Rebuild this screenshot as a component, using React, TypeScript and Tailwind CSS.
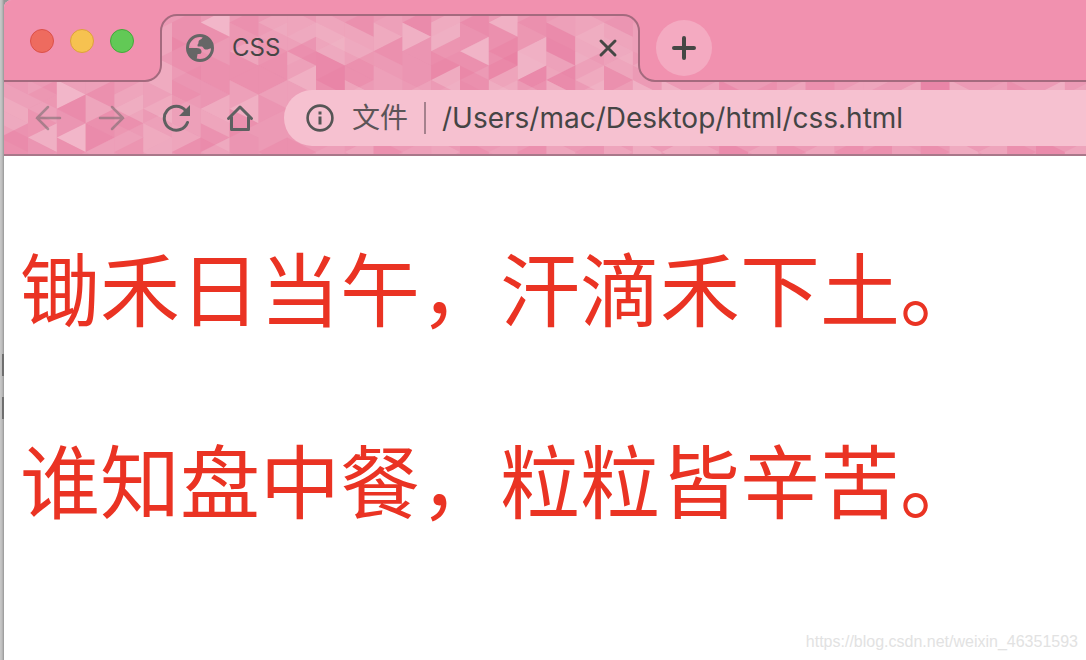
type Facet = [col: number, step: number, shape: "L" | "R" | "U" | "D", tone: number];

const W = 28.8;
const H = 14.4;

// L and R are triangles pointing left or right, U and D are bands rising or falling.
const facets: Facet[] = [
  [0, 5, "D", 1], [0, 6, "D", 2], [0, 8, "L", -3], [0, 7, "R", 1], [0, 9, "D", -2],
  [1, 5, "L", -2], [1, 5, "R", 1], [1, 6, "U", 1], [1, 7, "R", -2], [1, 8, "L", 4], [1, 9, "R", -1],
  [2, 5, "R", 5], [2, 6, "L", -3], [2, 4, "L", 1], [2, 8, "L", 5], [2, 7, "R", -1], [2, 9, "R", -2],
  [3, 4, "R", 1], [3, 5, "L", -2], [3, 6, "R", 2], [3, 7, "L", -2], [3, 8, "R", -3], [3, 9, "L", 1],
  [4, 5, "U", 2], [4, 6, "L", 2], [4, 7, "R", -2], [4, 8, "D", 1], [4, 9, "L", -2],
  [5, 5, "D", 1], [5, 6, "L", 2], [5, 7, "U", 1], [5, 8, "D", 2], [5, 9, "U", 1], [5, 1, "U", 2], [5, 3, "D", 3],
  [6, 0, "U", -2], [6, 2, "D", -2], [6, 4, "L", -1], [6, 5, "R", -2], [6, 6, "D", 1], [6, 8, "R", 2], [6, 9, "L", -2],
  [7, 0, "L", 5], [7, 1, "R", -2], [7, 3, "D", -2], [7, 5, "R", -1], [7, 6, "L", 3], [7, 7, "D", 2], [7, 8, "R", -3], [7, 9, "L", 1],
  [8, 0, "U", -2], [8, 1, "R", 1], [8, 2, "L", 2], [8, 3, "R", -2], [8, 4, "L", -2], [8, 5, "D", 1], [8, 6, "L", 3], [8, 7, "R", -2], [8, 8, "D", -1],
  [9, 0, "L", 2], [9, 1, "U", 1], [9, 2, "D", -2], [9, 4, "R", -2], [9, 5, "L", 1], [9, 6, "R", -1], [9, 9, "L", -2],
  [10, 0, "D", 2], [10, 1, "U", 1], [10, 2, "L", -3], [10, 3, "D", 1], [10, 4, "L", 3], [10, 5, "R", 1], [10, 9, "R", -2],
  [11, 0, "D", 2], [11, 1, "D", 2], [11, 2, "U", 1], [11, 3, "D", -4], [11, 5, "D", -2], [11, 9, "U", 1],
  [12, 0, "L", -2], [12, 1, "D", 2], [12, 2, "R", 1], [12, 3, "L", -2], [12, 4, "R", -2], [12, 5, "R", 3], [12, 9, "L", 2],
  [13, 0, "U", 1], [13, 1, "R", 2], [13, 2, "L", -2], [13, 4, "D", 1], [13, 9, "R", -2],
  [14, 0, "L", -3], [14, 1, "R", 4], [14, 2, "L", -1], [14, 3, "D", -1], [14, 5, "U", 2], [14, 9, "U", 1],
  [15, 0, "U", 3], [15, 1, "U", 1], [15, 2, "U", -2], [15, 3, "R", -2], [15, 4, "L", 3], [15, 5, "U", 1], [15, 9, "R", 2],
  [16, 0, "U", -3], [16, 1, "D", 1], [16, 2, "L", 4], [16, 3, "R", -2], [16, 4, "D", -2], [16, 5, "D", -1], [16, 9, "D", -2],
  [17, 0, "L", 4], [17, 1, "D", -2], [17, 2, "U", -2], [17, 3, "U", -2], [17, 4, "U", 3], [17, 5, "R", 2], [17, 9, "L", 1],
  [18, 0, "U", -2], [18, 1, "R", 1], [18, 2, "U", 4], [18, 3, "D", 1], [18, 4, "L", -4], [18, 5, "U", 1], [18, 9, "U", -2],
  [19, 0, "L", 1], [19, 1, "D", -3], [19, 2, "D", -1], [19, 3, "R", 2], [19, 4, "L", -3], [19, 5, "R", 3], [19, 9, "D", 2],
  [20, 0, "D", 2], [20, 1, "U", 2], [20, 2, "R", 1], [20, 3, "D", 1], [20, 4, "L", 2], [20, 5, "U", 2], [20, 9, "L", -1],
  [21, 0, "L", -1], [21, 1, "D", 2], [21, 2, "R", 1], [21, 3, "L", 2], [21, 4, "D", -2], [21, 5, "U", 2], [21, 9, "R", 2],
  [22, 1, "D", 1], [22, 3, "L", 2], [22, 5, "D", 4], [22, 9, "D", 3],
  [23, 5, "R", 4], [23, 9, "L", 3], [24, 5, "U", 2], [24, 9, "R", 2], [25, 5, "D", -3], [25, 9, "D", -3],
  [26, 5, "U", -2], [26, 9, "L", 2], [27, 5, "L", 2], [27, 9, "R", -2], [28, 4, "D", -2], [28, 9, "U", 2],
  [29, 5, "U", 2], [29, 9, "L", -2], [30, 4, "R", 2], [30, 9, "U", -2], [31, 5, "L", 3], [31, 9, "D", 1],
  [32, 4, "D", -4], [32, 9, "R", -2], [33, 5, "R", 3], [33, 9, "D", 3], [34, 5, "U", 1], [34, 9, "L", 2],
  [35, 5, "R", -2], [35, 9, "R", -2], [36, 5, "L", 4], [36, 9, "D", -3], [37, 5, "U", 2], [37, 9, "U", 2],
];

function points([col, step, shape]: Facet) {
  const x1 = col * W - 0.8;
  const x2 = x1 + W;
  const y = (n: number) => 8 + (step + n) * H;
  switch (shape) {
    case "L":
      return `${x2},${y(0)} ${x2},${y(2)} ${x1},${y(1)}`;
    case "R":
      return `${x1},${y(0)} ${x1},${y(2)} ${x2},${y(1)}`;
    case "U":
      return `${x1},${y(1)} ${x2},${y(0)} ${x2},${y(2)} ${x1},${y(3)}`;
    default:
      return `${x1},${y(0)} ${x2},${y(1)} ${x2},${y(3)} ${x1},${y(2)}`;
  }
}

function ThemeBackground() {
  return (
    <svg className="absolute inset-0 h-full w-full" aria-hidden="true">
      <g transform="translate(-4 0)">
        <rect width="4000" height="156" fill="#ec9ab5" />
        {facets.map((facet, i) => (
          <polygon
            key={i}
            points={points(facet)}
            fill={facet[3] > 0 ? "#f7cdd8" : "#e66c97"}
            fillOpacity={Math.abs(facet[3]) * 0.11}
          />
        ))}
        <path
          d="M-4 81H145A16 16 0 0 0 161 65V31A16 16 0 0 1 177 15H623A16 16 0 0 1 639 31V65A16 16 0 0 0 655 81H4000V-4H-4Z"
          fill="#f191af"
          stroke="#a46a7e"
          strokeWidth="2"
        />
      </g>
    </svg>
  );
}

function GlobeIcon() {
  return (
    <svg viewBox="0 0 28 28" className="size-7" fill="none" aria-hidden="true">
      <circle cx="14" cy="14" r="12.5" stroke="#666" strokeWidth="3" />
      <path
        d="M17 2C16.500 4 16 5 14.500 5.500C13 6 12.500 7 12.500 8.500C12.500 10 11.500 10 11.500 11.500C11.500 13 13 12.500 15.500 12.500C17.500 12.500 17 15 19.500 15.500C21.500 16 22.500 14.500 26.500 14C26.500 8 23 4 17 2Z"
        fill="#666"
      />
      <path
        d="M2 14H10.500C13.500 14 15.500 15 15.500 17.500C15.500 20 14 20 12 20C11 20 11.500 22 10.500 25.500C5 24.500 2 19.500 2 14Z"
        fill="#666"
      />
    </svg>
  );
}

function BackIcon({ className = "" }: { className?: string }) {
  return (
    <svg viewBox="0 0 28 28" className={`size-7 ${className}`} fill="none" stroke="#666" strokeOpacity="0.5" strokeWidth="2.500" strokeLinecap="round" aria-hidden="true">
      <path d="M26 14H3M14 3L3 14L14 25" />
    </svg>
  );
}

function ReloadIcon() {
  return (
    <svg viewBox="0 0 28 28" className="size-7" fill="none" aria-hidden="true">
      <path d="M23.500 6.500A12 12 0 1 0 25.500 18.500" stroke="#5f6061" strokeWidth="3" strokeLinecap="round" />
      <path d="M28 1V12H17Z" fill="#5f6061" />
    </svg>
  );
}

function HomeIcon() {
  return (
    <svg viewBox="0 0 28 28" className="size-7" fill="none" stroke="#5f6061" strokeWidth="3" strokeLinecap="round" strokeLinejoin="round" aria-hidden="true">
      <path d="M2.500 14.500L14 3L25.500 14.500M5.500 13V25.500H22.500V13" />
    </svg>
  );
}

function InfoIcon() {
  return (
    <svg viewBox="0 0 28 28" className="size-7 shrink-0" fill="none" aria-hidden="true">
      <circle cx="14" cy="14" r="12.400" stroke="#555" strokeWidth="2.600" />
      <path d="M14 12.500V20.500M14 7.500V10.500" stroke="#555" strokeWidth="3" />
    </svg>
  );
}

export default function App() {
  return (
    <div className="relative min-h-screen bg-[linear-gradient(90deg,#c9c9c9_0,#bdbdbd_2px,#969696_4px)] pl-1 font-['Inter','Noto_Sans_CJK_SC',sans-serif]">
      <div className="relative flex min-h-screen flex-col overflow-hidden rounded-tl-lg bg-white">
        <header className="relative border-b-2 border-[#a9788a]">
          <ThemeBackground />

          <div className="relative flex h-[82px] items-center pt-3.5">
            <div className="-mt-3.5 flex w-[156px] shrink-0 gap-4 pl-[26px]">
              <button aria-label="Close window" className="size-6 rounded-full border border-[#dc5049] bg-[#ee6b5f]" />
              <button aria-label="Minimize window" className="size-6 rounded-full border border-[#dda03b] bg-[#f6c250]" />
              <button aria-label="Zoom window" className="size-6 rounded-full border border-[#44a83a] bg-[#62c956]" />
            </div>

            <div className="flex w-[480px] shrink-0 items-center pr-[22px] pl-[26px]">
              <GlobeIcon />
              <span className="ml-[18px] grow text-2xl leading-7 text-[#454545]">CSS</span>
              <button aria-label="Close tab">
                <svg viewBox="0 0 20 20" className="size-5" stroke="#454745" strokeWidth="3" strokeLinecap="round">
                  <path d="M3 3L17 17M17 3L3 17" />
                </svg>
              </button>
            </div>

            <button aria-label="New tab" className="ml-4 flex size-14 items-center justify-center rounded-full bg-[#f4aac1]">
              <svg viewBox="0 0 24 24" className="size-6" stroke="#454745" strokeWidth="4" strokeLinecap="round">
                <path d="M12 2V22M2 12H22" />
              </svg>
            </button>
          </div>

          <div className="relative flex h-[72px] items-center">
            <nav className="flex w-[280px] shrink-0 gap-9 pl-[30px]">
              <button aria-label="Back"><BackIcon /></button>
              <button aria-label="Forward"><BackIcon className="rotate-180" /></button>
              <button aria-label="Reload"><ReloadIcon /></button>
              <button aria-label="Home"><HomeIcon /></button>
            </nav>

            <div className="flex h-14 grow items-center rounded-l-full bg-[#f6c1d0] pl-[22px]">
              <InfoIcon />
              <label htmlFor="address" className="ml-[18px] shrink-0 text-[28px] leading-8 text-[#5c5558]">
                文件
              </label>
              <span className="mx-4 h-8 w-0.5 shrink-0 bg-[#a5818d]" />
              <input
                id="address"
                type="text"
                defaultValue="/Users/mac/Desktop/html/css.html"
                className="h-10 min-w-0 grow bg-transparent text-[28px] text-[#454545] outline-none"
              />
            </div>
          </div>
        </header>

        <main className="grow px-4 pt-[73px] font-['Noto_Sans_CJK_SC',sans-serif] text-[80px] leading-[112px] text-[#ea3323]">
          <p className="mb-20">锄禾日当午，汗滴禾下土。</p>
          <p>谁知盘中餐，粒粒皆辛苦。</p>
        </main>

        <footer className="pr-2 pb-2 text-right font-['Liberation_Sans',sans-serif] text-base leading-5 text-[#e2e2e2]">
          https://blog.csdn.net/weixin_46351593
        </footer>
      </div>

      <div className="absolute top-[354px] left-0.5 h-[22px] w-0.5 bg-[#6f6f6f]" />
      <div className="absolute top-[397px] left-0.5 h-[22px] w-0.5 bg-[#6f6f6f]" />
    </div>
  );
}
